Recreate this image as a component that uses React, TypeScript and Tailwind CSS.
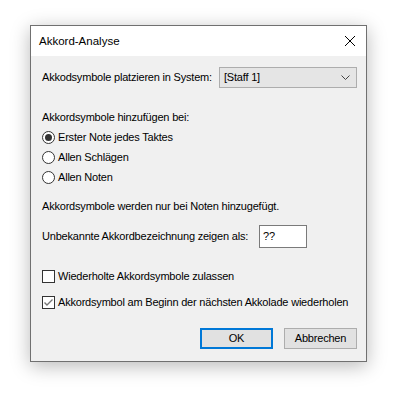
import React from 'react';

function Radio({ checked, label }: { checked?: boolean; label: string }) {
  return (
    <div className="flex items-center h-[20px]">
      <span className="w-[13px] h-[13px] rounded-full border border-[#333333] bg-white flex items-center justify-center shrink-0">
        {checked && <span className="w-[7px] h-[7px] rounded-full bg-[#333333]" />}
      </span>
      <span className="ml-[3px]">{label}</span>
    </div>
  );
}

function Check({ checked, label }: { checked?: boolean; label: string }) {
  return (
    <div className="flex items-center h-[16px]">
      <span className="w-[13px] h-[13px] border border-[#333333] bg-white flex items-center justify-center shrink-0">
        {checked && (
          <svg width="11" height="11" viewBox="0 0 11 11">
            <path d="M1.5 5.5 L4 8 L9.5 2.5" fill="none" stroke="#777777" strokeWidth="1.4" />
          </svg>
        )}
      </span>
      <span className="ml-[3px]">{label}</span>
    </div>
  );
}

export default function App() {
  return (
    <div className="w-[405px] h-[401px] bg-white pt-[25px] pl-[30px] font-['Liberation_Sans',Arial,sans-serif] text-[11px] tracking-[-0.2px] text-black whitespace-nowrap">
      <div className="w-[337px] h-[337px] border border-[#707070] bg-[#f0f0f0] shadow-[0_4px_18px_rgba(0,0,0,0.28)] flex flex-col">
        <div className="h-[30px] bg-white flex items-center justify-between pl-[8px] pr-[10px] shrink-0">
          <span className="text-[11.5px] tracking-normal mt-[1px]">Akkord-Analyse</span>
          <svg width="12" height="12" viewBox="0 0 12 12">
            <path d="M1 1 L11 11 M11 1 L1 11" stroke="#000" strokeWidth="1" />
          </svg>
        </div>
        <div className="flex flex-col pl-[11px] pr-[9px]">
          <div className="mt-[11px] h-[21px] flex items-center justify-between">
            <span>Akkodsymbole platzieren in System:</span>
            <div className="w-[138px] h-[21px] bg-[#e5e5e5] border border-[#adadad] flex items-center justify-between pl-[4px] pr-[6px]">
              <span>[Staff 1]</span>
              <svg width="9" height="6" viewBox="0 0 9 6">
                <path d="M0.5 0.5 L4.5 4.5 L8.5 0.5" fill="none" stroke="#444" strokeWidth="1" />
              </svg>
            </div>
          </div>
          <div className="mt-[21px] h-[16px] flex items-center">Akkordsymbole hinzufügen bei:</div>
          <div className="mt-[2px] flex flex-col">
            <Radio checked label="Erster Note jedes Taktes" />
            <Radio label="Allen Schlägen" />
            <Radio label="Allen Noten" />
          </div>
          <div className="mt-[11px] h-[16px] flex items-center">Akkordsymbole werden nur bei Noten hinzugefügt.</div>
          <div className="mt-[11px] h-[23px] flex items-center">
            <span>Unbekannte Akkordbezeichnung zeigen als:</span>
            <div className="ml-[11px] w-[48px] h-[23px] bg-white border border-[#7a7a7a] flex items-center pl-[3px]">??</div>
          </div>
          <div className="mt-[20px]">
            <Check label="Wiederholte Akkordsymbole zulassen" />
          </div>
          <div className="mt-[10px]">
            <Check checked label="Akkordsymbol am Beginn der nächsten Akkolade wiederholen" />
          </div>
          <div className="mt-[18px] flex justify-end gap-[11px]">
            <button className="w-[73px] h-[21px] bg-[#e1e1e1] border-2 border-[#0078d7] flex items-center justify-center">OK</button>
            <button className="w-[73px] h-[21px] bg-[#e1e1e1] border border-[#adadad] flex items-center justify-center">Abbrechen</button>
          </div>
        </div>
      </div>
    </div>
  );
}
